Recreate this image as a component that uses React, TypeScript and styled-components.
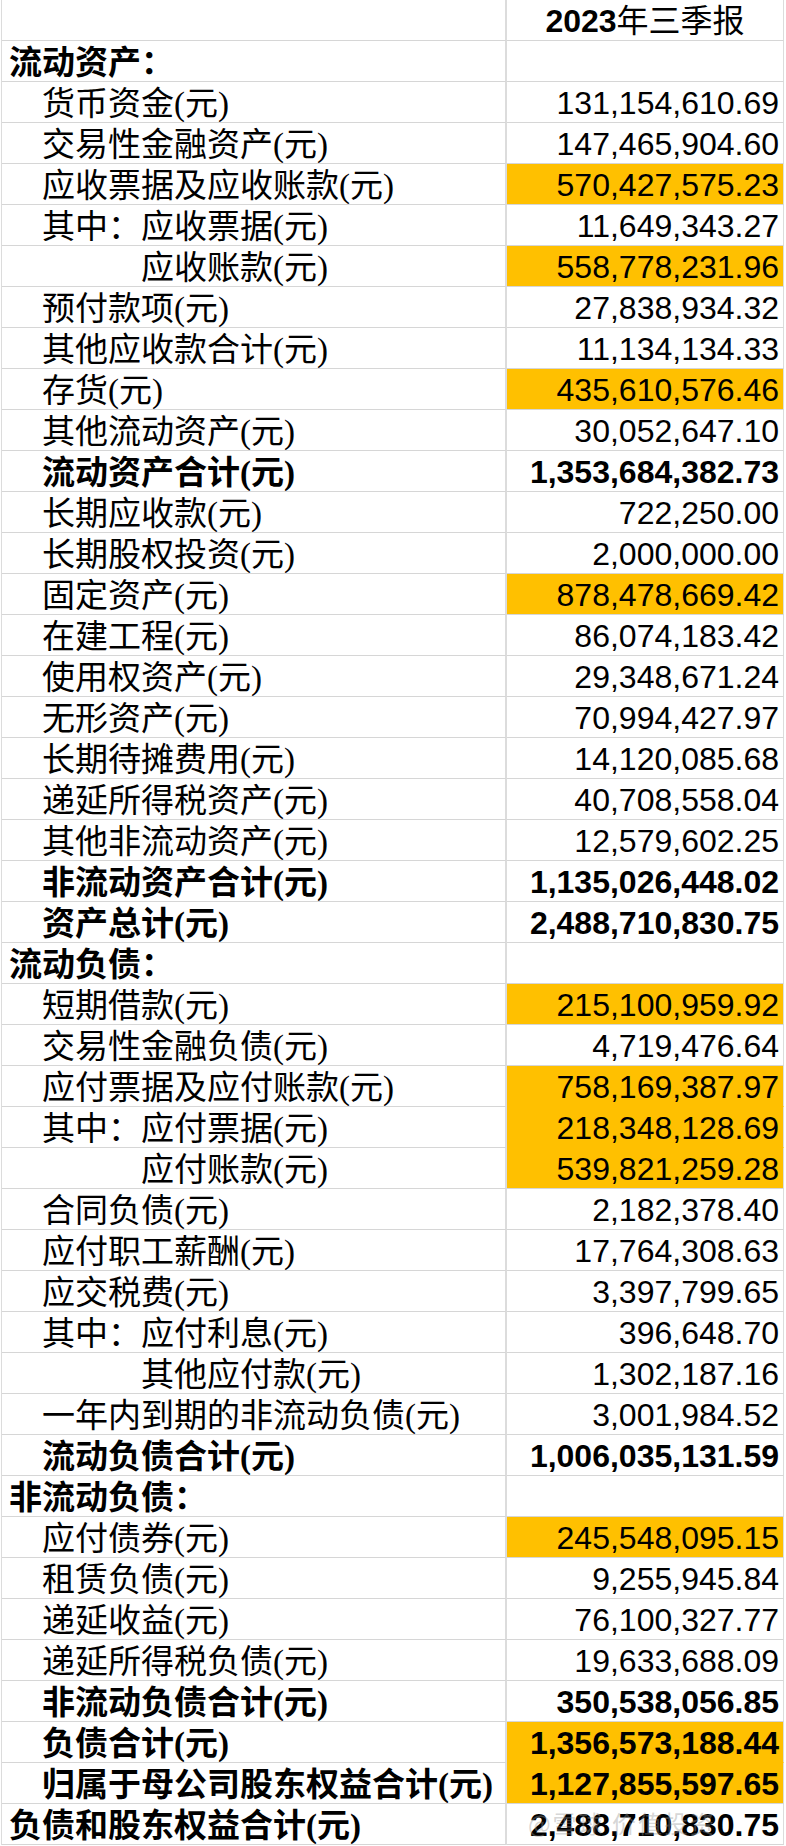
import React from "react";
import styled, { createGlobalStyle } from "styled-components";

const GlobalStyle = createGlobalStyle`
  html, body {
    margin: 0;
    padding: 0;
    background: #ffffff;
  }
`;

type Row = {
  label: string;
  value?: string;
  level?: 0 | 1 | 2;
  bold?: boolean;
  hl?: boolean;
};

const rows: Row[] = [
  { label: "流动资产：", level: 0, bold: true },
  { label: "货币资金(元)", value: "131,154,610.69" },
  { label: "交易性金融资产(元)", value: "147,465,904.60" },
  { label: "应收票据及应收账款(元)", value: "570,427,575.23", hl: true },
  { label: "其中：应收票据(元)", value: "11,649,343.27" },
  { label: "应收账款(元)", value: "558,778,231.96", level: 2, hl: true },
  { label: "预付款项(元)", value: "27,838,934.32" },
  { label: "其他应收款合计(元)", value: "11,134,134.33" },
  { label: "存货(元)", value: "435,610,576.46", hl: true },
  { label: "其他流动资产(元)", value: "30,052,647.10" },
  { label: "流动资产合计(元)", value: "1,353,684,382.73", bold: true },
  { label: "长期应收款(元)", value: "722,250.00" },
  { label: "长期股权投资(元)", value: "2,000,000.00" },
  { label: "固定资产(元)", value: "878,478,669.42", hl: true },
  { label: "在建工程(元)", value: "86,074,183.42" },
  { label: "使用权资产(元)", value: "29,348,671.24" },
  { label: "无形资产(元)", value: "70,994,427.97" },
  { label: "长期待摊费用(元)", value: "14,120,085.68" },
  { label: "递延所得税资产(元)", value: "40,708,558.04" },
  { label: "其他非流动资产(元)", value: "12,579,602.25" },
  { label: "非流动资产合计(元)", value: "1,135,026,448.02", bold: true },
  { label: "资产总计(元)", value: "2,488,710,830.75", bold: true },
  { label: "流动负债：", level: 0, bold: true },
  { label: "短期借款(元)", value: "215,100,959.92", hl: true },
  { label: "交易性金融负债(元)", value: "4,719,476.64" },
  { label: "应付票据及应付账款(元)", value: "758,169,387.97", hl: true },
  { label: "其中：应付票据(元)", value: "218,348,128.69", hl: true },
  { label: "应付账款(元)", value: "539,821,259.28", level: 2, hl: true },
  { label: "合同负债(元)", value: "2,182,378.40" },
  { label: "应付职工薪酬(元)", value: "17,764,308.63" },
  { label: "应交税费(元)", value: "3,397,799.65" },
  { label: "其中：应付利息(元)", value: "396,648.70" },
  { label: "其他应付款(元)", value: "1,302,187.16", level: 2 },
  { label: "一年内到期的非流动负债(元)", value: "3,001,984.52" },
  { label: "流动负债合计(元)", value: "1,006,035,131.59", bold: true },
  { label: "非流动负债：", level: 0, bold: true },
  { label: "应付债券(元)", value: "245,548,095.15", hl: true },
  { label: "租赁负债(元)", value: "9,255,945.84" },
  { label: "递延收益(元)", value: "76,100,327.77" },
  { label: "递延所得税负债(元)", value: "19,633,688.09" },
  { label: "非流动负债合计(元)", value: "350,538,056.85", bold: true },
  { label: "负债合计(元)", value: "1,356,573,188.44", bold: true, hl: true },
  { label: "归属于母公司股东权益合计(元)", value: "1,127,855,597.65", bold: true, hl: true },
  { label: "负债和股东权益合计(元)", value: "2,488,710,830.75", level: 0, bold: true },
];

const Sheet = styled.div`
  position: relative;
  display: grid;
  grid-template-columns: 505px 277px;
  grid-auto-rows: 41px;
  width: 784px;
  margin-left: 1px;
  border-left: 1px solid #dcdcdc;
  font-size: 32px;
  color: #000;
`;

const LabelCell = styled.div<{ $level: number; $bold?: boolean }>`
  display: flex;
  align-items: center;
  box-sizing: border-box;
  padding-left: ${(p) => (p.$level === 0 ? 7 : p.$level === 2 ? 139 : 40)}px;
  padding-top: 4px;
  border-bottom: 1px solid #d6d6d6;
  border-right: 2px solid #dcdcdc;
  font-family: "Liberation Serif", "Noto Sans CJK SC", serif;
  font-size: 33px;
  font-weight: ${(p) => (p.$bold ? 700 : 400)};
  white-space: nowrap;
  overflow: hidden;
  line-height: 1;
`;

const ValueCell = styled.div<{ $hl?: boolean; $joined?: boolean; $bold?: boolean }>`
  display: flex;
  align-items: center;
  justify-content: flex-end;
  box-sizing: border-box;
  padding-right: 4px;
  padding-top: 2px;
  background: ${(p) => (p.$hl ? "#ffc000" : "#ffffff")};
  border-bottom: 1px solid ${(p) => (p.$joined ? "#ffc000" : "#d6d6d6")};
  border-right: 1px solid #dcdcdc;
  font-family: "Liberation Sans", Arial, sans-serif;
  font-weight: ${(p) => (p.$bold ? 700 : 400)};
  white-space: nowrap;
  line-height: 1;
`;

const HeaderCell = styled.div`
  display: flex;
  align-items: center;
  justify-content: center;
  box-sizing: border-box;
  padding-top: 2px;
  border-bottom: 1px solid #d6d6d6;
  border-right: 1px solid #dcdcdc;
  font-family: "Liberation Sans", "Noto Sans CJK SC", sans-serif;
  line-height: 1;
  white-space: nowrap;
`;

const Year = styled.span`
  font-weight: 700;
`;

const BlankCell = styled.div`
  border-bottom: 1px solid #d6d6d6;
  border-right: 2px solid #dcdcdc;
`;

const Watermark = styled.div`
  position: absolute;
  right: 70px;
  bottom: 10px;
  font-family: "Noto Sans CJK SC", sans-serif;
  font-size: 24px;
  line-height: 1;
  color: rgba(150, 150, 150, 0.4);
  pointer-events: none;
  letter-spacing: 2px;
`;

export default function App() {
  return (
    <>
      <GlobalStyle />
      <Sheet>
        <BlankCell />
        <HeaderCell>
          <Year>2023</Year>年三季报
        </HeaderCell>
        {rows.map((r, i) => {
          const next = rows[i + 1];
          const joined = !!(r.hl && next && next.hl);
          return (
            <React.Fragment key={i}>
              <LabelCell $level={r.level ?? 1} $bold={r.bold}>
                {r.label}
              </LabelCell>
              <ValueCell $hl={r.hl} $joined={joined} $bold={r.bold}>
                {r.value ?? ""}
              </ValueCell>
            </React.Fragment>
          );
        })}
        <Watermark>@雪球 价值投资</Watermark>
      </Sheet>
    </>
  );
}
